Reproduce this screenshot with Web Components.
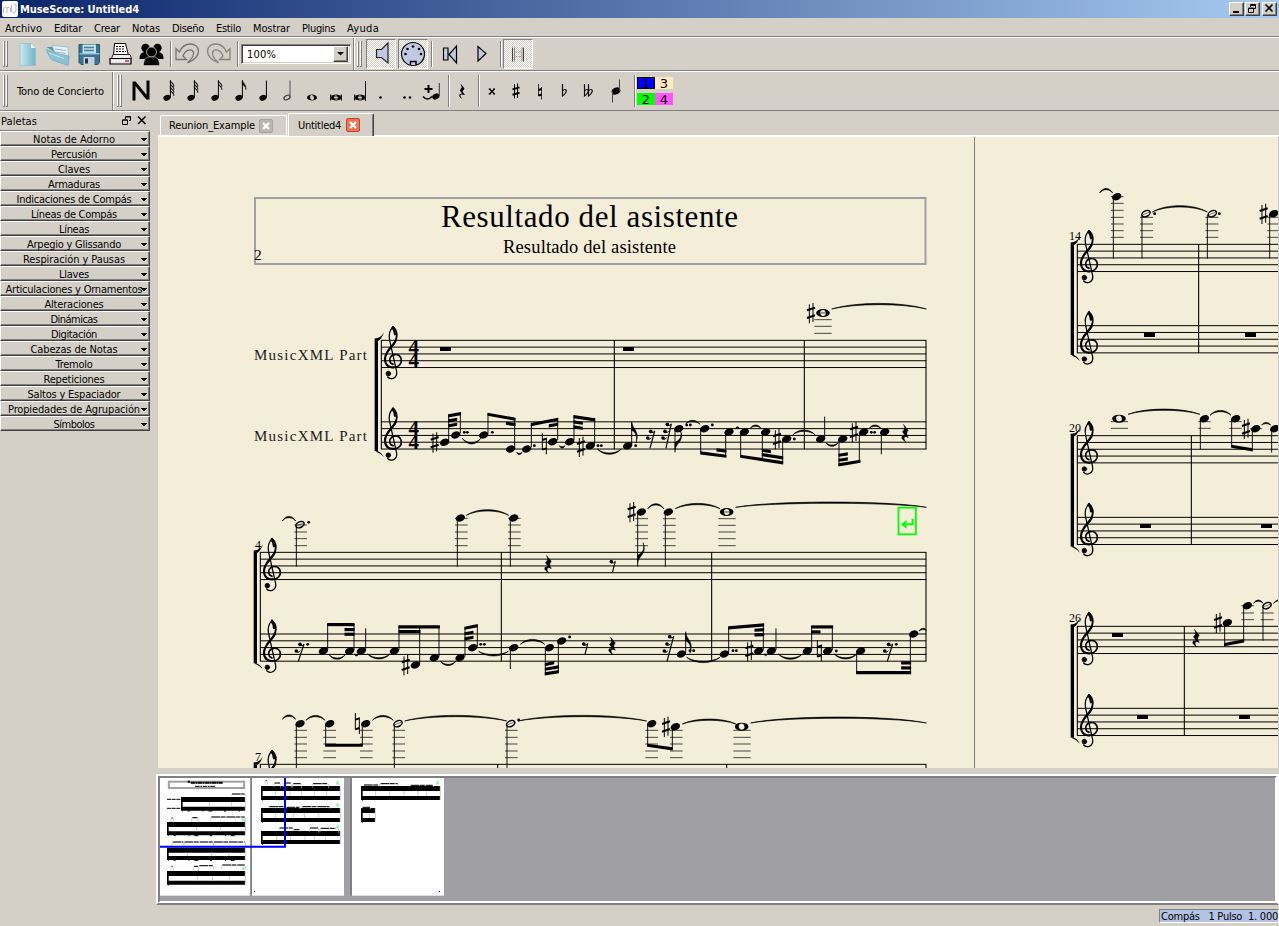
<!DOCTYPE html>
<html lang="es"><head><meta charset="utf-8"><title>MuseScore: Untitled4</title>
<style>
html,body{margin:0;height:100%;overflow:hidden;background:#d4d0c8}
body{font:11px "DejaVu Sans Condensed","DejaVu Sans",sans-serif;color:#000}
</style></head><body>
<muse-app></muse-app>
<script>
const define=(name,html,init)=>{
  customElements.define(name,class extends HTMLElement{
    connectedCallback(){
      if(this.shadowRoot)return;
      const r=this.attachShadow({mode:'open'});
      r.innerHTML=typeof html==='function'?html(this):html;
      if(init)init(this,r);
    }
  });
};

/* Label whose tracking is adjusted so the text spans w pixels */
define('fit-text','<style>:host{display:inline-block;white-space:pre;line-height:13px}</style><span><slot></slot></span>',(el,r)=>{
  const w=+el.getAttribute('w'),s=r.firstElementChild.nextElementSibling;
  if(w){s.style.letterSpacing=((w-s.getBoundingClientRect().width)/el.textContent.length)+'px';el.style.width=w+'px';}
});

/* ---------- toolbar icons ---------- */
const head=(x,y)=>`<ellipse cx="${x}" cy="${y}" rx="3.700" ry="2.800" transform="rotate(-25 ${x} ${y})"/>`;
const flags=n=>{let s='';for(let i=0;i<n;i++){const y=i*3.1;s+=`<path d="M14.4 ${1.5+y}c.6 3 4 4 3.400 ${n>1?6:9} .2-3-2-4-3.400-5z" stroke="#000" stroke-width=".6"/>`;}return s;};
const upNote=n=>head(11,18.800)+`<path d="M14.400 18.500V1.500" stroke="#000" stroke-width="1"/>`+flags(n);
const wholeI='<path fill-rule="evenodd" d="M7 18.500a5 3 0 1 0 10 0a5 3 0 1 0-10 0zM10 18a1.700 2.300-20 1 0 4 1a1.700 2.300-20 1 0-4-1z"/>';
const sharpI='<path d="M10.500 5v14.500M13.500 4.500v14.500" stroke="#000" fill="none"/><path d="M8.500 10.400l7-2M8.500 15.800l7-2" stroke="#000" stroke-width="2"/>';
const restI='<path d="M10.500 4.500L14.500 9.500 12.500 12.500 15 16 11 15.500C9.500 16.500 11 18.500 12.500 20 8 18 8.500 14.500 12 14.500L9.800 11.200 11.800 8.500z"/>';
const flat=x=>`<path d="M${x} 5v12c4.500-3 4.500-6.500 2.500-6.500-1.200 0-1.800.600-2.500 1.600" fill="none" stroke="#111" stroke-width="1.200"/>`;
const I={
 newdoc:[31,30,'<linearGradient id="g"><stop stop-color="#cdeaf0"/><stop offset="1" stop-color="#6fb2c6"/></linearGradient><path d="M8 4.500h11l4.500 4.500v17.500h-15.500z" fill="url(#g)" stroke="#8cc0cf" stroke-width=".7"/><path d="M19 4.500v4.500h4.500z" fill="#e9f7fa"/>'],
 open:[31,30,'<path d="M3.500 8h8l1.500 3h8l1 9z" fill="#5694ae"/><path d="M9 6.500l16 1.500 1 17-10-2z" fill="#e8f3f6" stroke="#9cc4d2"/><path d="M12 10l11 1.500M12 13l11 1.500" stroke="#8fb6c5"/><path d="M3 10.500l13 4.500 10 2-1 9.500L8 20.500z" fill="#8cc2d5" stroke="#6ea7bd" stroke-width=".7"/><path d="M6 14l15 5.500" stroke="#c8e6ee"/>'],
 save:[31,30,'<path d="M5 5.500h20.500v18l-1.500 2H7l-2-2z" fill="#3c7290" stroke="#28566f"/><path d="M8.500 5.500h13.500v9h-13.500z" fill="#bfe0ec"/><path d="M10 8.500h10M10 11.500h10" stroke="#4b7e98" stroke-width="1.300"/><path d="M9.500 18h11v8h-11z" fill="#c7d0d6"/><path d="M11 19.500h3v5h-3z" fill="#173b54"/><path d="M5.500 14.800h20" stroke="#9dd4ec" stroke-width="1.200"/>'],
 print:[31,30,'<path d="M9.500 4.500h11l3 12h-15z" fill="#fff" stroke="#000"/><path d="M11 7.500h8.500M11 10h9M11 12.500h10" stroke="#000" stroke-dasharray="2 1"/><path d="M8 15.500h17l1.500 4h-20z" fill="#eee" stroke="#222"/><path d="M5 19.500h21v5.500h-21z" fill="#e0e0e4" stroke="#000" stroke-width="1.200"/><path d="M6 22h15" stroke="#fff"/><path d="M20 22h4" stroke="#c33" stroke-width="1.500"/>'],
 people:[31,30,'<circle cx="9.500" cy="9" r="4.200"/><circle cx="21.500" cy="9" r="4.200"/><path d="M3.500 20c0-5 2-7 6-7h12c4 0 6 2 6 7z"/><circle cx="15.500" cy="13" r="5" stroke="#d4d0c8" stroke-width=".8"/><path d="M7.500 26.500c0-6 2.500-8.500 5.500-8.500h5c3 0 5.500 2.500 5.500 8.500z" stroke="#d4d0c8" stroke-width=".6"/>'],
 undo:[31,30,'<path d="M4 9.500v11h10.500l-3.500-3.500c2.500-7 9-7.500 10.500-3.500 1 3.500-2.500 7-6 10.500 7-3 11-7 11-12C26 3 12 2 7.500 13z" fill="#d4d0c8" stroke="#76746f" stroke-width="1.300"/>'],
 redo:[31,30,'<path d="M4 9.500v11h10.500l-3.500-3.500c2.500-7 9-7.500 10.500-3.500 1 3.500-2.500 7-6 10.500 7-3 11-7 11-12C26 3 12 2 7.500 13z" fill="#d4d0c8" stroke="#86847f" stroke-width="1.300" transform="translate(31 0) scale(-1 1)"/>'],
 speaker:[28,28,'<path d="M9.500 9.500h5l6.500-6.500v20l-6.500-5.500h-5z" fill="#c2c8e2" stroke="#222" stroke-width="1.200"/>'],
 midi:[28,28,'<circle cx="14" cy="14" r="11.500" fill="#c2c8e2" stroke="#000" stroke-width="1.200"/><path d="M11.500 25v-3.500h5.500V25" fill="#c2c8e2" stroke="#000" stroke-width="1.500"/><circle cx="6.500" cy="14" r="1.300"/><circle cx="22" cy="14" r="1.300"/><circle cx="8.500" cy="9" r="1.300"/><circle cx="20" cy="9" r="1.300"/><circle cx="14" cy="6.500" r="1.300"/>'],
 rewind:[31,30,'<path d="M8.500 9h4.500v12H8.500zM21.500 7v17l-7.500-8.500z" fill="#c2c8e2" stroke="#000" stroke-width="1.200"/>'],
 play:[31,30,'<path d="M12 7.500v14.500l8-7.500z" fill="#c2c8e2" stroke="#000" stroke-width="1.200"/>'],
 repeat:[28,28,'<path d="M8.500 7.500v14M19.500 7.500v14" stroke="#444"/><path d="M10.500 7.500v14M18 7.500v14" stroke="#888"/><path d="M12.500 11.500v1M12.500 16v1M16 11.500v1M16 16v1" stroke="#e55" stroke-width="1.400"/>'],
 N:[24,30,'<path d="M5 24.500V5.500M5.500 6.500L18.500 22.500M19 23.500V4.500" fill="none" stroke="#000" stroke-width="3"/>'],
 n64:[24,24,upNote(4)],n32:[24,24,upNote(3)],n16:[24,24,upNote(2)],n8:[24,24,upNote(1)],n4:[24,24,upNote(0)],
 n2:[24,24,'<ellipse cx="11" cy="18.500" rx="3.300" ry="2" transform="rotate(-28 11 18.500)" fill="none" stroke="#333" stroke-width="1.200"/><path d="M14 18V1.500" stroke="#555"/>'],
 n1:[24,24,wholeI],
 breve:[24,24,wholeI+'<path d="M6.500 15.500v6M17.500 15.500v6M6.500 17h11M6.500 20h11" stroke="#000" stroke-width=".9"/>'],
 longa:[24,24,wholeI+'<path d="M6.500 15.500v6M17.500 2v20M6.500 17h11M6.500 20h11" stroke="#000" stroke-width=".9"/>'],
 dot:[24,24,'<circle cx="8.500" cy="18.500" r="1.300"/>'],
 ddot:[24,24,'<circle cx="8.500" cy="18.500" r="1.300"/><circle cx="14" cy="18.500" r="1.300"/>'],
 tie:[24,24,'<path d="M8.500 6v8M4.500 10h8" stroke="#000" stroke-width="2"/><path d="M3 17.500q4.500 5 9 0" stroke="#000" stroke-width="1.600" fill="none"/>'+head(15.800,17.500)+'<path d="M19.300 17V4" stroke="#333"/>'],
 rest:[24,24,restI],
 dsharp:[24,24,'<path d="M9.500 10l5 5M14.500 10l-5 5" stroke="#000" stroke-width="1.300"/><path d="M8.800 9.500h2v1.500h-2zM13 9.500h2v1.500h-2zM8.800 14h2v1.500h-2zM13 14h2v1.500h-2z"/>'],
 sharp:[24,24,sharpI],
 nat:[24,24,'<path d="M10.500 5v12M13.500 8v12.500" stroke="#333"/><path d="M10.500 11l3-1M10.500 16.500l3-1" stroke="#000" stroke-width="2"/>'],
 flat:[24,24,flat(10.500)],
 dflat:[24,24,flat(8.500)+flat(12.500)],
 flip:[24,24,'<ellipse cx="12" cy="12" rx="4.500" ry="3.400" transform="rotate(-25 12 12)"/><path d="M8.500 12.500v11M15.500 12V0.500" stroke="#444"/>']
};
define('tool-icon',el=>{const[w,h,b]=I[el.getAttribute('name')];
 return `<style>:host{display:flex;flex:none;align-items:center;justify-content:center;width:${w}px;height:${h}px}
 :host([on]){width:28px;height:28px;border:1px solid;border-color:#808080 #fff #fff #808080;background:repeating-conic-gradient(#fff 0 25%,#d4d0c8 0 50%) 0 0/2px 2px}</style>
 <svg width="${w}" height="${h}" viewBox="0 0 ${w} ${h}">${b}</svg>`;});
define('tool-sep','<style>:host{display:block;flex:none;width:1px;height:26px;background:#808080;border-right:1px solid #fff}</style>');
define('tool-edge','<style>:host{display:block;flex:none;width:1px;align-self:stretch;background:#808080;border-right:1px solid #fff}</style>');
define('tool-grip','<style>:host{display:flex;flex:none;height:26px}i{width:1px;background:#fff;border-right:1px solid #808080;border-bottom:1px solid #808080;margin-right:1px}:host([tall]){height:32px}</style><i></i><i></i>');
define('tool-bar','<style>:host{display:flex;align-items:center;box-sizing:border-box;border-bottom:1px solid #808080;border-top:1px solid #fff}</style><slot></slot>');

define('title-bar',`<style>
:host{display:flex;align-items:center;height:18px;background:linear-gradient(90deg,#0a246a,#a6caf0);color:#fff;font-weight:bold;box-sizing:border-box;padding:0 2px}
.logo{flex:none;width:16px;height:16px;margin-right:2px}
.b{display:flex;box-sizing:border-box;width:15px;height:14px;background:#d4d0c8;border:1px solid;border-color:#fff #404040 #404040 #fff;box-shadow:inset -1px -1px #808080}
.sp{flex:1}.b+.b{margin-left:1px}.b.c{margin-left:2px}.b svg{width:13px;height:12px}</style>
<svg class="logo" viewBox="0 0 16 16"><rect width="16" height="16" rx="2" fill="#fff"/><path d="M1.500 12V7q2-2 3.500 0v5M5 7q2-2 3.500 0v4M9.500 4v6q2 3.500 4.500 0V4l-2-1.500" fill="none" stroke="#bbb" stroke-width="1"/></svg>
<fit-text w="119">MuseScore: Untitled4</fit-text><div class="sp"></div>
<div class="b"><svg><path d="M3 8h6v2H3z"/></svg></div>
<div class="b"><svg fill="none" stroke="#000"><path d="M4.500 4V1.500h5v4H8M4.500 2.500h5M2.500 5h5v4.500h-5zM2.500 5.500h5"/></svg></div>
<div class="b c"><svg><path d="M2.500 1.500l7 7M9.500 1.500l-7 7" stroke="#000" stroke-width="1.600"/></svg></div>`);

define('menu-bar',`<style>:host{display:flex;height:19px;box-sizing:border-box;align-items:center;padding:2px 0 0 5px;gap:12px;border-bottom:1px solid #808080}</style>`+
[['Archivo',37],['Editar',28],['Crear',26],['Notas',28],['Diseño',32],['Estilo',25],['Mostrar',37],['Plugins',33],['Ayuda',32]].map(([t,w])=>`<fit-text w="${w}">${t}</fit-text>`).join(''));

define('zoom-box',`<style>:host{display:flex;flex:none;box-sizing:border-box;width:110px;height:20px;background:#fff;border:1px solid;border-color:#808080 #fff #fff #808080;box-shadow:inset 1px 1px #404040,inset -1px -1px #d4d0c8;padding:2px;align-items:center;justify-content:space-between}
fit-text{margin-left:3px;padding-top:1px}b{display:flex;width:13px;height:14px;background:#d4d0c8;border:1px solid;border-color:#fff #404040 #404040 #fff;box-shadow:inset -1px -1px #808080}</style>
<fit-text w="29">100%</fit-text><b><svg width="13" height="14"><path d="M3 5h7L6.500 8.500z"/></svg></b>`);

define('voice-grid',`<style>:host{display:grid;grid-template-columns:18px 18px;grid-template-rows:12px 12px;row-gap:4px;font-family:"DejaVu Sans",sans-serif;font-size:13px;line-height:13px;text-align:center;margin-left:1px}
div{box-sizing:border-box}.a{background:#00f;outline:1px solid #000;outline-offset:-1px}.b{background:#ffebbd}.c{background:#0f0}.d{background:#ff54ff}</style>
<div class="a">1</div><div class="b">3</div><div class="c">2</div><div class="d">4</div>`);

define('palette-row',`<style>:host{display:flex;box-sizing:border-box;height:15px;border:1px solid;border-color:#fff #404040 #404040 #fff;box-shadow:inset 0 -1px #808080,inset -1px 0 #808080;align-items:center;overflow:hidden}
div{width:144px;flex:none;display:flex;justify-content:center;height:13px;margin:1px 0 0 1px}svg{margin:3px 0 0 -5px;flex:none}</style>
<div><slot></slot></div><svg width="6" height="4"><path d="M0 0h6v1H5v1H4v1H2V2H1V1H0z"/></svg>`);

const pal=[['Notas de Adorno',82],['Percusión',46],['Claves',32],['Armaduras',52],['Indicaciones de Compás',115],['Líneas de Compás',86],['Líneas',30],['Arpegio y Glissando',94],['Respiración y Pausas',102],['Llaves',30],['Articulaciones y Ornamentos',137],['Alteraciones',59],['Dinámicas',47],['Digitación',46],['Cabezas de Notas',87],['Tremolo',37],['Repeticiones',61],['Saltos y Espaciador',93],['Propiedades de Agrupación',132],['Símbolos',41]];
define('palette-panel',`<style>:host{display:block;width:150px;box-sizing:border-box}
header{display:flex;height:20px;align-items:center;padding:0 3px 0 1px;box-sizing:border-box;border-bottom:1px solid #808080;border-top:1px solid #fff}
header span{flex:1}svg{flex:none;margin:-2px 0 0 4px}</style>
<header><fit-text w="36">Paletas</fit-text><span></span>
<svg width="11" height="11" fill="none" stroke="#000"><path d="M4.500 4V1.500h5v4H8M4.500 2h5M1.500 5h5v4.500h-5zM1.500 5h5"/></svg>
<svg width="11" height="11"><path d="M2 1.500l7.500 7.500M9.500 1.500L2 9" stroke="#000" stroke-width="1.500"/></svg></header>`+
pal.map(([t,w])=>`<palette-row><fit-text w="${w}">${t}</fit-text></palette-row>`).join(''));

define('score-tab',el=>{const on=el.hasAttribute('on');return `<style>:host{display:flex;box-sizing:border-box;align-items:center;border:1px solid #fff;border-width:1px 1px 0 1px;border-radius:2px 2px 0 0;padding-left:8px;gap:4px;height:20px;width:127px}
:host([on]){height:23px;width:86px;border-right:1px solid #404040;box-shadow:inset -1px 0 #808080;padding-left:9px;gap:5px;background:#d4d0c8;margin-bottom:-1px}
:host([on]) fit-text{padding-bottom:1px}</style><slot></slot>
<svg width="14" height="14"><rect x=".5" y=".5" width="13" height="13" rx="1.500" fill="${on?'#e47a5c':'#b8b6ae'}" stroke="${on?'#d93a24':'#a5a39b'}"/><path d="M4 4l6 6M10 4l-6 6" stroke="#fff" stroke-width="2.200"/></svg>`;});

/* ---------- engraving ---------- */
class Pen{
  constructor(){this.s='';}
  at(x,y,f){this.s+=`<g transform="translate(${x} ${y}) scale(.33333)">`;f(this);this.s+='</g>';return this;}
  N(...a){for(let i=0;i<a.length;i+=2)this.s+=`<ellipse cx="${a[i]}" cy="${a[i+1]}" rx="14.500" ry="10.500" transform="rotate(-22 ${a[i]} ${a[i+1]})"/>`;}
  H(x,y){this.s+=`<ellipse cx="${x}" cy="${y}" rx="13" ry="8.500" transform="rotate(-25 ${x} ${y})" fill="#f4edd8" stroke="#000" stroke-width="4.500"/><path d="M${x-9} ${y+3}L${x+9} ${y-4}" stroke="#000" stroke-width="1.500"/>`;}
  W(x,y){this.s+=`<ellipse cx="${x}" cy="${y}" rx="20.500" ry="12"/><ellipse cx="${x}" cy="${y}" rx="8.500" ry="9" transform="rotate(-20 ${x} ${y})" fill="#f4edd8"/>`;}
  S(...a){for(let i=0;i<a.length;i+=3)this.s+=`<path d="M${a[i]} ${a[i+1]}V${a[i+2]}" stroke="#000" stroke-width="2.800"/>`;}
  B(...a){for(let i=0;i<a.length;i+=4){const[x,y,u,v]=a.slice(i);this.s+=`<path d="M${x-1.500} ${y-1}L${u+1.500} ${v-1}v9.500L${x-1.500} ${y+8.500}z"/>`;}}
  D(...a){for(let i=0;i<a.length;i+=2)this.s+=`<circle cx="${a[i]}" cy="${a[i+1]}" r="4.300"/>`;}
  T(...a){for(let i=0;i<a.length;i+=5){const[x,y,u,v,h]=a.slice(i),q=Math.min((u-x)*.25,110),k=h*1.33,t=h>0?2.500:-2.500;
    this.s+=`<path d="M${x} ${y}C${x+q} ${y+k-t} ${u-q} ${v+k-t} ${u} ${v}C${u-q} ${v+k+t} ${x+q} ${y+k+t} ${x} ${y}z" stroke="#000" stroke-width="2"/>`;}}
  L(a,b,...y){for(const k of y)this.s+=`<path d="M${a} ${k}H${b}" stroke="#000" stroke-width="2.600" opacity=".8"/>`;}
  sharp(x,y){this.s+=`<path d="M${x-5} ${y-26}v57M${x+6} ${y-30}v57" stroke="#000" stroke-width="3"/><path d="M${x-12} ${y-8}l24-8M${x-12} ${y+15}l24-8" stroke="#000" stroke-width="6.500"/>`;}
  nat(x,y){this.s+=`<path d="M${x-6} ${y-32}v50M${x+6} ${y-19}v50" stroke="#000" stroke-width="3"/><path d="M${x-6} ${y-12}l12-4M${x-6} ${y+17}l12-4" stroke="#000" stroke-width="6"/>`;}
  Q(x,y){this.s+=`<path d="M${x-5} ${y-27}L${x+10} ${y-9}Q${x+1} ${y} ${x+10} ${y+13}C${x-4} ${y+5} ${x-6} ${y+16} ${x+3} ${y+26}C${x-16} ${y+16} ${x-12} ${y+5} ${x+1} ${y+7}L${x-8} ${y-5}Q${x+3} ${y-12} ${x-5} ${y-27}z" stroke="#000" stroke-width="1"/>`;}
  E(x2,y2,...h){this.s+=`<path d="M${h[0]+11} ${h[1]-1}L${x2} ${y2}" stroke="#000" stroke-width="3.500"/>`;
    for(let i=0;i<h.length;i+=2)this.s+=`<circle cx="${h[i]-1}" cy="${h[i+1]}" r="5.500"/><path d="M${h[i]} ${h[i+1]+3}q7 3 ${11-i/2} -4" fill="none" stroke="#000" stroke-width="3"/>`;}
  R(x,y){this.s+=`<rect x="${x}" y="${y}" width="33" height="12"/>`;}
  fd(x,y){this.s+=`<path d="M${x} ${y}c4 22 26 28 13 62c6-26-6-34-13-38z" stroke="#000" stroke-width="1.500"/>`;}
  fu(x,y){this.s+=`<path d="M${x} ${y}c4-22 30-28 16-60c8 26-8 32-16 38z" stroke="#000" stroke-width="1.500"/>`;}
  clef(x,y){this.s+=`<g transform="translate(${x} ${y})" fill="none" stroke="#000" stroke-linecap="round"><path d="M0-100C-11-90-13-74-10-60L11 34C14 54-7 60-16 50" stroke-width="3.800"/><path d="M0-101C9-92 14-80 10-66C7-50-7-40-14-30" stroke-width="5.500"/><path d="M9-62C4-44-24-30-24-4C-24 16-10 22 2 21" stroke-width="6.500"/><path d="M2 21C18 21 26 10 25-1C24-14 14-19 4-17C-9-14-14-2-7 8L0 12" stroke-width="5"/><path d="M-1-98C4-92 6-85 6-78" stroke-width="7"/><circle cx="-14" cy="40" r="7" fill="#000" stroke-width="2"/></g>`;}
  sys(x,r,y1,y2,...bars){for(const y of[y1,y2])for(let i=0;i<5;i++)this.s+=`<path d="M${x} ${y+i*20.4}H${r}" stroke="#000" stroke-width="3"/>`;
    for(const b of[x+1,...bars])this.s+=`<path d="M${b} ${y1}V${y2+82}" stroke="#000" stroke-width="3.200"/>`;
    this.s+=`<rect x="${x-19}" y="${y1-6}" width="10" height="${y2-y1+94}"/><path d="M${x-14} ${y1-5}Q${x} ${y1-8} ${x+9} ${y1-24}Q${x+2} ${y1-3} ${x-10} ${y1+3}zM${x-14} ${y2+86}Q${x} ${y2+90} ${x+9} ${y2+106}Q${x-2} ${y2+94} ${x-14} ${y2+90}z"/>`;
    const c=x+36;this.clef(c,y1+60);this.clef(c,y2+60);}
  text(x,y,t,w,size,extra=''){this.s+=`<text x="${x}" y="${y}" textLength="${w}" font-size="${size}" ${extra}>${t}</text>`;}
}
function engrave(){
 const p=new Pen(),g='#a0a0a4';
 p.s+=`<path d="M974.500 137V769" stroke="#808080"/><rect x="255" y="198" width="670.500" height="66" fill="none" stroke="${g}" stroke-width="2"/>`;
 p.text(441,227,'Resultado del asistente',297,31);p.text(503,253,'Resultado del asistente',173,18.500);p.text(254,260,'2',8,15.500);
 p.text(254,360,'MusicXML Part',113,15,'fill="#1c1c1c"');p.text(254,441,'MusicXML Part',113,15,'fill="#1c1c1c"');
 p.text(255,549,'4',6,12);p.text(255,761,'7',6,12);p.text(1069,240,'14',12,12);p.text(1069,432,'20',12,12);p.text(1069,622,'26',12,12);
 for(const y of[353.600,367.400,435,448.800])p.text(408.500,y,'4',10.500,20.200,'font-weight="bold" lengthAdjust="spacingAndGlyphs"');
 p.at(240,290,p=>{
  p.sys(423,2059,151,395.500,1123,1693,2058);p.R(600,171);
  p.sharp(584,457);p.N(614,457,647,435,731,435,812,477,860,477,938,455,989,455,1051,467);
  p.S(626,452,374,661,430,367,744,430,370,824,473,384,874,472,400,953,450,384,1002,450,376,1064,462,385);
  p.B(626,374,661,367,626,389,650,384,626,404,650,399,744,369,825,384,799,396,825,400,874,400,953,384,928,404,953,399,1002,376,1064,386,1002,392,1027,396,1002,407,1027,411);
  p.D(673,427,682,427,757,427,883,467,1074,467,1084,467);p.nat(913,462);p.sharp(1023,470);
  p.T(667,445,722,445,15,830,487,846,487,5,958,467,975,467,5,1072,477,1144,477,14);
 });
 p.at(580,290,p=>{
  p.R(129,171);p.N(143,467,296,416,374,416,447,426,493,426,557,426,620,447,722,447,788,447,851,426,914,426);
  p.S(155,462,395,285,420,487,362,420,487,437,430,500,482,430,500,547,430,508,608,450,520,734,443,380,777,450,528,838,430,515,904,430,493);
  p.fd(155,397);p.fu(285,480);p.E(210,475,213,424,204,444);p.E(258,475,263,403,256,424,250,444);
  p.D(167,467,320,405,331,405,397,405,643,447,874,427,884,427);
  p.T(318,401,360,403,-9,467,416,478,416,-4,511,415,543,415,-8,638,435,706,435,-13,738,458,774,458,9,868,415,902,415,-8);
  p.B(362,485,438,495,411,476,438,480,482,495,608,515,547,477,571,481,547,490,608,500,777,521,840,510,777,492,802,488,777,507,802,503);
  p.sharp(591,447);p.sharp(822,426);p.Q(975,430);
  p.sharp(693,69);p.W(729,69);p.L(703,755,89,109,130);p.L(710,748,69);p.T(755,57,1039,57,-15);
 });
 p.at(240,490,p=>{
  p.sys(60,2059,187,432,784,1415,2058);
  p.T(127,93,167,93,-12,679,76,806,76,-15);p.H(180,104);p.D(206,97);p.S(169,108,230,652,88,230,811,88,230);
  p.N(661,84,821,84);for(const x of[163,645,804])p.L(x,x+38,105,126,146,167);p.L(645,683,85);p.L(804,842,85);p.Q(924,223);
  p.E(175,514,181,463,170,483);p.D(203,463,722,463,733,463,989,441);
  p.N(250,483,329,483,364,483,463,483,526,525,583,503,660,503,698,473,821,473,928,473,965,453);
  p.S(263,480,402,342,480,402,377,480,415,477,480,408,539,522,408,597,500,408,675,500,412,712,470,405,811,477,537,916,478,555,955,457,548);
  p.B(263,400,342,400,315,415,342,415,315,429,342,429,477,407,598,407,477,421,540,421,675,411,712,403,675,428,699,423,675,443,699,438,916,548,955,541,916,534,955,527,916,520,941,514);
  p.sharp(497,525);p.T(268,495,315,495,11,343,492,356,492,4,383,492,450,492,13,601,513,648,513,12,716,484,805,484,12,841,463,914,463,-13);
 });
 p.at(580,490,p=>{
  p.E(97,248,95,215);p.sharp(155,66);p.N(184,66,265,66);p.S(173,70,230,256,70,230);p.fu(173,218);p.W(440,66);
  for(const x of[166,249])p.L(x,x+38,86,106,126,146,167);p.L(415,467,86,106,126,146,167);p.L(425,455,66);
  p.T(203,57,252,57,-14,286,56,420,56,-14,467,52,1039,52,-14);
  p.s+='<g fill="none" stroke="#0f0" stroke-width="5.500"><rect x="955.500" y="53" width="52" height="80"/><path d="M998 86v17h-26" stroke-width="6"/><path d="M963 103l17-13v7l-5 6 5 6v7z" fill="#0f0" stroke="none"/></g>';
  p.E(15,493,12,462);p.Q(96,468);p.E(261,514,270,440,262,462,254,483);
  p.N(304,492,433,492,536,483,574,483,682,483,743,483,842,483,1001,432);
  p.S(317,488,425,446,490,412,550,480,402,588,480,415,695,480,408,757,480,408,830,487,550,991,436,550);p.fd(317,428);
  p.D(330,482,341,482,459,482,469,482,769,483,949,463);p.sharp(508,483);p.nat(718,483);
  p.B(446,410,551,401,525,417,551,415,525,431,551,430,695,407,758,407,695,422,720,422,830,544,992,544,965,515,992,515,965,530,992,530);
  p.E(922,514,927,463,915,483);
  p.T(320,502,420,502,14,595,492,667,492,14,763,492,830,492,13,552,492,562,492,3,1017,423,1039,421,-5);
 });
 p.at(240,700,p=>{
  p.sys(60,2059,193,438,773,1460,2058);
  p.T(127,58,167,58,-11,198,61,255,61,-13,397,61,460,61,-13,494,63,800,63,-15,834,63,1220,63,-15,1327,72,1488,72,-13,1532,69,2059,69,-16);
  p.N(180,71,269,71,377,71,1235,71,1306,80);p.H(474,71);p.H(812,71);p.W(1505,80);p.D(836,60);p.nat(352,71);p.sharp(1278,80);
  p.S(169,75,240,257,75,137,367,75,137,463,75,240,801,75,240,1223,75,137,1297,84,147);p.B(257,132,367,132,1223,132,1297,143);
  for(const x of[163,250,360,457,795,1216,1290])p.L(x,x+38,91,112,132,153,173);p.L(1480,1532,91,112,132,153,173);
 });
 p.at(1060,180,p=>{
  p.sys(51,700,193,437,416);p.sys(51,700,767,1012,394);
  p.T(119,39,158,39,-12,277,96,442,96,-17,204,703,420,703,-14,450,706,513,706,-13,605,735,632,735,-6);
  p.N(170,50,641,101,433,716,527,716,587,746,644,746);p.H(258,101);p.H(457,101);p.D(284,101,478,101);p.W(177,716);
  p.S(160,54,236,246,105,236,442,105,236,629,105,236,421,720,808,515,720,800,577,750,812,635,750,818);
  p.L(153,191,50,70,91,112,132,152,172);for(const x of[240,436,622])p.L(x,x+39,112,132,152,172);
  p.L(153,204,725,745);p.L(415,452,725,745);p.L(508,545,725,745);p.L(570,606,746);
  p.B(515,795,577,806);p.sharp(611,101);p.sharp(558,746);p.R(252,459);p.R(555,459);p.R(240,1032);p.R(603,1032);
 });
 p.at(1060,590,p=>{
  p.sys(51,700,109,355,373);p.R(156,129);p.R(231,375);p.R(537,375);p.Q(408,145);p.sharp(474,98);p.N(502,98,562,47);p.H(621,47);
  p.S(494,102,168,551,51,155,609,51,152);p.B(494,160,551,149);p.L(544,582,47,69,89);p.L(602,641,69,89);p.T(581,40,609,40,-8,640,40,700,40,-12);
 });
 return p.s;
}
define('score-canvas',()=>`<style>:host{display:block;height:631px;margin-left:2px;background:#f4edd8;border-right:1px solid #c8c8c8;overflow:hidden}svg{display:block;font-family:"Liberation Serif",serif}</style><svg width="1120" height="631" viewBox="158 137 1120 631">${engrave()}</svg>`);

function navigator_(){
 let s='<rect x="30" y="39" width="271" height="353" fill="#fff"/><rect x="301" y="39" width="5" height="353" fill="#808080"/><rect x="306" y="39" width="276" height="353" fill="#fff"/><rect x="600" y="39" width="6" height="353" fill="#808080"/><rect x="606" y="39" width="276" height="353" fill="#fff"/>';
 s+='<rect x="56.500" y="50" width="226" height="19" fill="none" stroke="#a0a0a4" stroke-width="6"/><path d="M113 50.500h7M122 53h96" stroke="#000" stroke-width="6" stroke-dasharray="14 1 5 1"/><path d="M135 64h60" stroke="#000" stroke-width="3" stroke-dasharray="14 2 5 2"/><path d="M51 103h40M51 130h40" stroke="#000" stroke-width="3" stroke-dasharray="12 2"/>';
 const sys=(x,r,y,y2,bars,low)=>{s+=`<path d="M${x} ${y}H${r}v15H${x+5}V${y2}H${r}v12H${x}z"/><path d="M${r+1} ${y}V${y2+12}${bars.map(b=>`M${b} ${y+15}V${y2}`).join('')}" stroke="#ccc" stroke-width="3"/>`;
  if(low)s+=`<path d="M${x+20} ${y2+13}H${r-4}" stroke="#000" stroke-width="3" stroke-dasharray="6 39 3 14 12 35"/>`;
  s+=`<path d="M${x+4} ${y2+13}h2" stroke="#000" stroke-width="3"/>`;};
 sys(93,285,96,125,[178,244],1);sys(51,285,171,199,[140,211],1);sys(51,285,248,273,[112,185,237],1);sys(51,285,318,347,[142,187,238]);
 sys(333,570,63,93,[377,420,455,493,530]);sys(333,570,129,159,[377,430,463,506]);sys(333,570,198,225,[380,422,465,493,526]);
 sys(633,870,63,93,[677,719,762,804,830]);sys(633,675,129,159,[658]);
 const arc=(a,b,y,h=12)=>{s+=`<path d="M${a} ${y+h}V${y+2}l4-2H${b-4}l4 2v${h}" fill="none" stroke="#bbb" stroke-width="2"/><path d="M${a+2} ${y}H${b-2}" stroke="#000" stroke-width="3" stroke-dasharray="26 2 14 3"/>`;};
 [[244,286,87,4],[63,70,159],[125,144,158],[182,286,156],[66,102,231],[102,190,231,8],[190,286,231],[63,70,304],[130,146,304],[146,190,302,8],[215,286,300],
 [345,352,47],[372,392,54],[400,424,54],[428,454,56],[487,536,56],[356,405,125,3],[408,450,127,3],[455,540,125,4],[387,430,189,6],[430,450,194,4],[478,506,189],[510,565,190],[640,690,60,3],[690,745,56,5],[780,850,61,3],[636,662,127,3]].forEach(a=>arc(...a));
 [[276,159],[276,304],[558,48],[558,114],[558,180],[858,48]].forEach(([x,y])=>s+=`<rect x="${x}" y="${y}" width="9" height="12" fill="#baffba"/><rect x="${x+2}" y="${y+5}" width="5" height="4" fill="#7ff07f"/>`);
 s+='<rect x="312" y="378" width="3" height="3"/><rect x="867" y="378" width="3" height="3"/><path d="M30 245.500H405V39" fill="none" stroke="#00f" stroke-width="6"/>';
 return s;
}
define('score-navigator',()=>`<style>:host{display:block;box-sizing:border-box;height:131px;margin-top:6px;border:2px solid;border-color:#fff #fff #808080 #fff;}
div{box-sizing:border-box;height:127px;border:2px solid;border-color:#808080 #fff #fff #808080;background:#a09fa4;overflow:hidden}svg{display:block}</style>
<div><svg width="320" height="123" viewBox="30 39 960 369">${navigator_()}</svg></div>`);

define('tab-strip',`<style>:host{display:flex;align-items:flex-end;height:24px;margin-left:2px;padding:0 0 0 2px;border-bottom:2px solid #fff;box-sizing:content-box;gap:1px}</style>
<score-tab><fit-text w="86">Reunion_Example</fit-text></score-tab><score-tab on><fit-text w="43">Untitled4</fit-text></score-tab>`);

define('status-bar',`<style>:host{display:flex;justify-content:flex-end;padding:4px 0 0 0}div{box-sizing:border-box;width:120px;height:14px;border:1px solid;border-color:#808080 #fff #fff #808080;background:#b4c3e4;padding-left:1px}</style>
<div><fit-text w="117">Compás   1 Pulso  1. 000</fit-text></div>`);

const ic=(...n)=>n.map(k=>`<tool-icon name="${k}"></tool-icon>`).join('');
define('muse-app',`<style>:host{display:flex;flex-direction:column;width:1279px;height:926px;background:#d4d0c8;overflow:hidden}
.t1{height:34px}.t2{height:40px}main{display:grid;grid-template-columns:156px 1fr;height:794px}
.m3{margin-left:3px}.g4{margin-left:4px}</style>
<title-bar></title-bar><menu-bar></menu-bar>
<tool-bar class="t1"><tool-grip class="m3"></tool-grip><tool-icon name="newdoc" style="margin-left:3px"></tool-icon>${ic('open','save','print','people')}
<tool-sep style="margin-left:3px"></tool-sep>${ic('undo','redo')}<tool-sep style="margin-left:3px"></tool-sep><zoom-box style="margin-left:2px"></zoom-box>
<tool-edge style="margin-left:2px"></tool-edge><tool-grip style="margin-left:2px"></tool-grip>
<tool-icon name="speaker" on style="margin-left:3px"></tool-icon><tool-icon name="midi" on style="margin-left:2px"></tool-icon>
<tool-sep style="margin-left:3px"></tool-sep><tool-icon name="rewind" style="margin-left:2px"></tool-icon>${ic('play')}<tool-sep style="margin-left:3px"></tool-sep><tool-icon name="repeat" on style="margin-left:1px"></tool-icon></tool-bar>
<tool-bar class="t2"><tool-grip tall class="m3"></tool-grip><fit-text w="87" style="margin-left:8px">Tono de Concierto</fit-text>
<tool-edge style="margin-left:8px"></tool-edge><tool-grip tall class="m3"></tool-grip>
<tool-icon name="N" style="margin-left:6px;margin-right:3px"></tool-icon>${ic('n64','n32','n16','n8','n4','n2','n1','breve','longa','dot','ddot','tie')}
<tool-sep class="g4" style="height:32px"></tool-sep>${ic('rest')}<tool-sep class="g4" style="height:32px"></tool-sep>${ic('dsharp','sharp','nat','flat','dflat')}<tool-icon name="flip" style="margin-left:4px"></tool-icon>
<tool-sep style="margin-left:6px;height:32px"></tool-sep><voice-grid></voice-grid></tool-bar>
<main><palette-panel></palette-panel><section><tab-strip></tab-strip><score-canvas></score-canvas><score-navigator></score-navigator></section></main>
<status-bar></status-bar>`);
</script></body></html>
